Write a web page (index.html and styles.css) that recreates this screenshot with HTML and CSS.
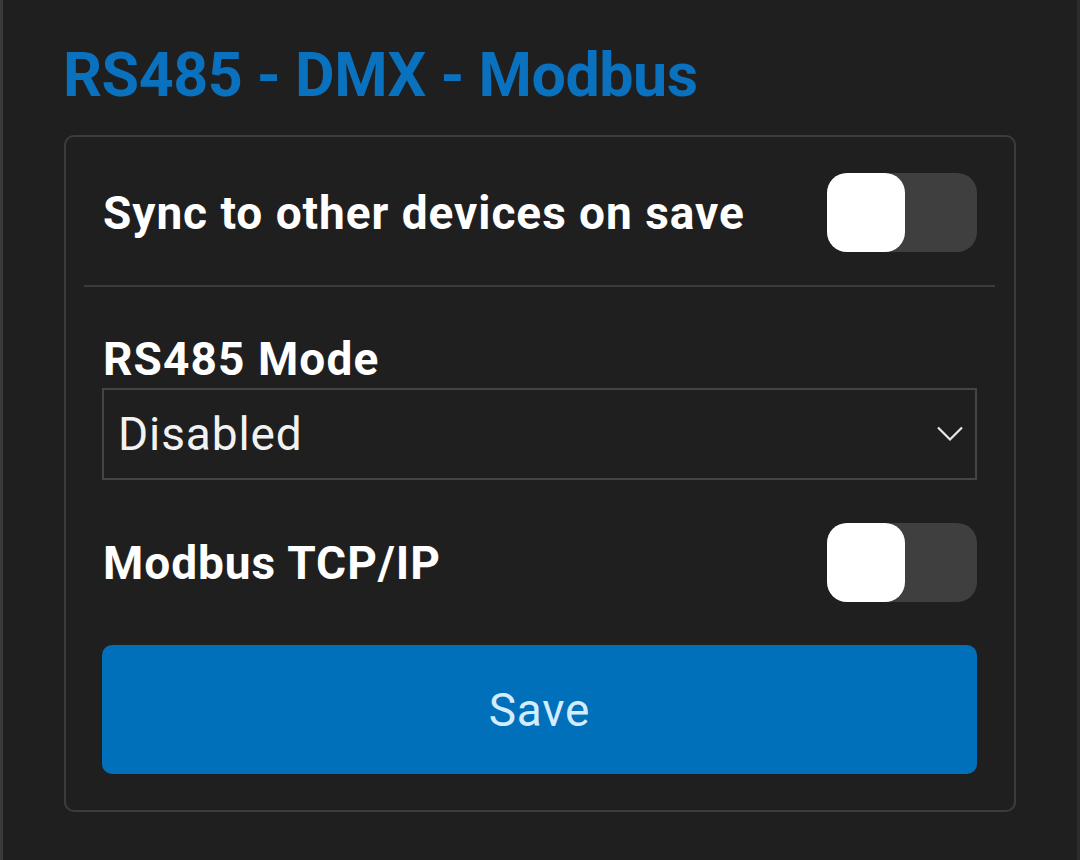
FILE: index.html
```html
<!DOCTYPE html>
<html>
<head>
<meta charset="utf-8">
<link rel="stylesheet" href="styles.css">
</head>
<body>
<div class="page">
  <h1 class="title">RS485 - DMX - Modbus</h1>
  <div class="card">
    <div class="row">
      <span class="label">Sync to other devices on save</span>
      <span class="toggle"><span class="knob"></span></span>
    </div>
    <div class="divider"></div>
    <div class="field">
      <div class="label field-label">RS485 Mode</div>
      <div class="select">
        <span class="select-value">Disabled</span>
        <svg class="chevron" width="26" height="16" viewBox="0 0 26 16"><path d="M1 1.5 L13 13.5 L25 1.5" fill="none" stroke="#e8e8e8" stroke-width="2.2"/></svg>
      </div>
    </div>
    <div class="row modbus">
      <span class="label">Modbus TCP/IP</span>
      <span class="toggle"><span class="knob"></span></span>
    </div>
    <button class="save">Save</button>
  </div>
</div>
</body>
</html>
```

FILE: styles.css
```css
html, body {
  margin: 0;
  padding: 0;
  background: #1f1f1f;
}
body {
  font-family: Roboto, "Noto Sans", sans-serif;
}
.page {
  height: 860px;
  box-sizing: border-box;
  border-left: 3px solid #3a3a3a;
  border-right: 3px solid #2c2c2c;
  padding: 0 61px 0 61px;
}
.title {
  margin: 0 0 0 -1px;
  padding-top: 39px;
  font-size: 61px;
  line-height: 72px;
  letter-spacing: -0.5px;
  font-weight: 700;
  color: #0a71be;
}
.card {
  margin-top: 24px;
  width: 952px;
  box-sizing: border-box;
  border: 2px solid #3c3c3c;
  border-radius: 10px;
  padding: 36px 37px 36px 36px;
}
.row {
  display: flex;
  align-items: center;
  justify-content: space-between;
}
.label {
  color: #ffffff;
  font-size: 46px;
  font-weight: 700;
  letter-spacing: 0.95px;
  padding-left: 1px;
}
.toggle {
  display: block;
  width: 150px;
  height: 79px;
  border-radius: 20px;
  background: #3f3f3f;
  position: relative;
}
.knob {
  position: absolute;
  left: 0;
  top: 0;
  width: 78px;
  height: 79px;
  border-radius: 20px;
  background: #ffffff;
}
.divider {
  height: 2px;
  background: #3c3c3c;
  margin: 33px -18px 0 -18px;
}
.field {
  margin-top: 46px;
}
.field-label {
  line-height: 52px;
  letter-spacing: 1.1px;
}
.select {
  margin-top: 3px;
  height: 92px;
  box-sizing: border-box;
  border: 2px solid #444444;
  display: flex;
  align-items: center;
  justify-content: space-between;
  padding: 0 12px 0 14px;
}
.select-value {
  color: #f2f2f2;
  font-size: 46px;
  font-weight: 400;
  letter-spacing: 0.9px;
}
.chevron {
  display: block;
}
.modbus {
  margin-top: 43px;
}
.save {
  display: block;
  width: 100%;
  height: 129px;
  margin-top: 43px;
  border: none;
  border-radius: 10px;
  background: #0070ba;
  color: #d4ecff;
  font-family: Roboto, "Noto Sans", sans-serif;
  font-size: 46px;
  letter-spacing: 0.75px;
  font-weight: 400;
}
```
